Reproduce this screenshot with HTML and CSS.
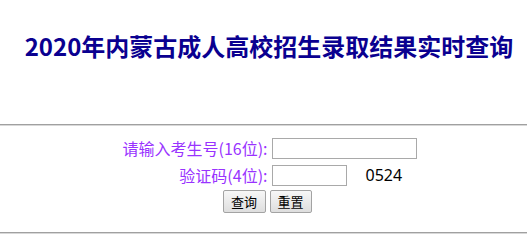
FILE: index.html
```html
<!DOCTYPE html>
<html lang="zh-CN">
<head>
<meta charset="utf-8">
<title>2020年内蒙古成人高校招生录取结果实时查询</title>
<link rel="stylesheet" href="styles.css">
</head>
<body>
<div class="page">
  <h1 class="title">2020年内蒙古成人高校招生录取结果实时查询</h1>
  <div class="rule"></div>
  <form class="query">
    <label class="label" for="ksh">请输入考生号(16位):</label>
    <div class="field"><input class="input input-long" id="ksh" type="text"></div>
    <label class="label" for="yzm">验证码(4位):</label>
    <div class="field"><input class="input input-short" id="yzm" type="text"><span class="code">0524</span></div>
    <div class="actions">
      <button class="btn btn-query" type="button">查询</button>
      <button class="btn btn-reset" type="reset">重置</button>
    </div>
  </form>
  <div class="rule rule-bottom"></div>
</div>
</body>
</html>
```

FILE: styles.css
```css
html, body {
  margin: 0;
  padding: 0;
  background: #ffffff;
}

.page {
  width: 100%;
}

.title {
  margin: 29px 0 0 0;
  padding-left: 11px;
  height: 34px;
  line-height: 34px;
  text-align: center;
  font-family: "Noto Sans CJK SC", "Noto Sans", sans-serif;
  font-size: 24px;
  font-weight: bold;
  color: #0a0090;
  white-space: nowrap;
}

.rule {
  margin-top: 61px;
  height: 0;
  border-top: 1px solid #a0a0a0;
  border-bottom: 1px solid #d8d8d8;
}

.rule-bottom {
  margin-top: 18px;
}

.query {
  margin: 11px 0 0 0;
  padding-left: 7px;
  display: grid;
  grid-template-columns: 150px 145px;
  grid-auto-rows: 23px;
  column-gap: 4px;
  row-gap: 4px;
  justify-content: center;
  font-family: "Noto Sans CJK SC", "Noto Sans", sans-serif;
}

.label {
  display: flex;
  align-items: center;
  justify-content: flex-end;
  font-size: 16px;
  line-height: 23px;
  color: #9933ff;
  white-space: nowrap;
}

.field {
  display: flex;
  align-items: center;
  white-space: nowrap;
}

.input {
  box-sizing: border-box;
  height: 21px;
  margin: 0;
  padding: 0 2px;
  border: 1px solid #a9a9a9;
  border-radius: 0;
  background: #ffffff;
  font-size: 13px;
}

.input-long {
  width: 145px;
}

.input-short {
  width: 75px;
}

.code {
  margin-left: 19px;
  font-family: "Noto Sans", "Open Sans", sans-serif;
  font-size: 16px;
  line-height: 23px;
  color: #000000;
}

.actions {
  grid-column: 1 / 3;
  margin-top: -1px;
  display: flex;
  justify-content: center;
  gap: 4px;
}

.btn {
  box-sizing: border-box;
  height: 23px;
  margin: 0;
  padding: 0;
  border: 1px solid #a3a3a3;
  border-radius: 2px;
  background: linear-gradient(#f7f7f7, #dedede);
  font-family: "Noto Sans CJK SC", sans-serif;
  font-size: 13px;
  line-height: 21px;
  color: #000000;
}

.btn-query {
  width: 43px;
}

.btn-reset {
  width: 42px;
}
```
